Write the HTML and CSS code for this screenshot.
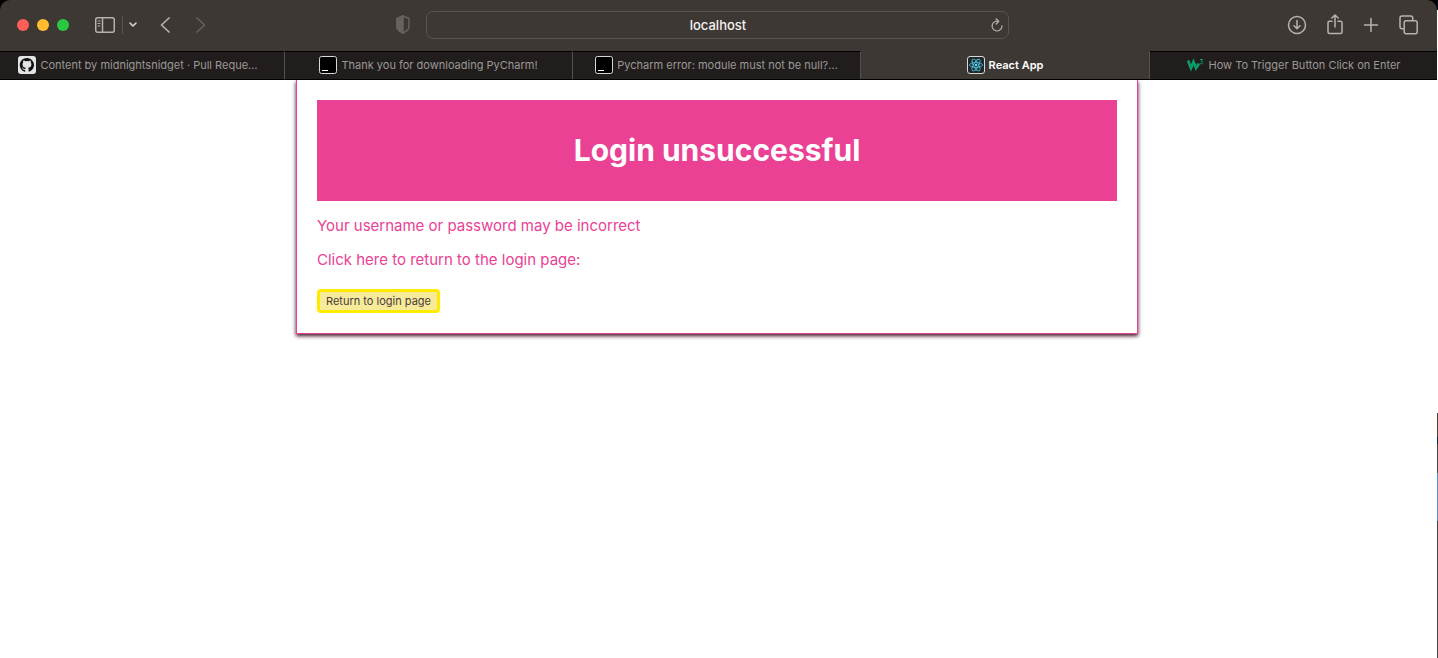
FILE: index.html
```html
<!DOCTYPE html>
<html lang="en">
<head>
<meta charset="utf-8">
<title>React App</title>
<link rel="stylesheet" href="styles.css">
</head>
<body>
<div class="window">
  <header class="browser">
    <div class="toolbar">
      <div class="tools-left">
        <div class="lights"><button class="light red" aria-label="Close"></button><button class="light amber" aria-label="Minimise"></button><button class="light green" aria-label="Zoom"></button></div>
        <button class="tool sidebar" aria-label="Show sidebar">
          <svg width="20" height="16" viewBox="0 0 20 16"><rect x=".7" y=".7" width="18.6" height="14.6" rx="2"/><path d="M7.5 1v14"/><path d="M3 4h2M3 6.500h2M3 9h2" stroke-width="1"/></svg>
        </button>
        <span class="divider"></span>
        <button class="tool menu" aria-label="Sidebar options">
          <svg width="8" height="6" viewBox="0 0 8 6"><path d="M1 1l3 3 3-3" stroke-width="1.6"/></svg>
        </button>
        <button class="tool back" aria-label="Back">
          <svg width="10" height="16" viewBox="0 0 10 16"><path d="M9 1L1.500 8 9 15" stroke-width="1.700"/></svg>
        </button>
        <button class="tool forward" aria-label="Forward">
          <svg width="10" height="16" viewBox="0 0 10 16"><path d="M1 1l7.500 7L1 15" stroke-width="1.700"/></svg>
        </button>
        <button class="tool shield" aria-label="Privacy report">
          <svg width="14" height="19" viewBox="0 0 14 19"><path d="M7 1l6 2.500v8.500c0 2.500-3 4.500-6 6-3-1.500-6-3.500-6-6V3.500z"/><path class="fill" d="M7 1L1 3.500V12c0 2.500 3 4.500 6 6z"/></svg>
        </button>
      </div>
      <div class="address">
        <input class="url" type="text" value="localhost" aria-label="Address">
        <button class="tool reload" aria-label="Reload">
          <svg width="12" height="14" viewBox="0 0 12 14"><path d="M10.900 7.800A4.900 4.900 0 1 1 6 3.200h1.500M5 .8l2.700 2.500L5.200 6" stroke-width="1.200"/></svg>
        </button>
      </div>
      <div class="tools-right">
        <button class="tool" aria-label="Downloads">
          <svg width="20" height="20" viewBox="0 0 20 20"><circle cx="10" cy="10" r="8.500"/><path d="M10 5.500v8M7 10.700l3 3 3-3"/></svg>
        </button>
        <button class="tool" aria-label="Share">
          <svg width="16" height="21" viewBox="0 0 16 21"><path d="M5 7.200H2.500c-1 0-1.500.5-1.500 1.500V18c0 1 .5 1.500 1.500 1.500h11c1 0 1.500-.5 1.500-1.500V8.700c0-1-.5-1.500-1.500-1.500H11M8 13V1M4.800 4L8 1l3.200 3"/></svg>
        </button>
        <button class="tool" aria-label="New tab">
          <svg width="16" height="16" viewBox="0 0 16 16"><path d="M8 1.500v13M1.500 8h13"/></svg>
        </button>
        <button class="tool" aria-label="Tab overview">
          <svg width="19" height="20" viewBox="0 0 19 20"><rect x="5.200" y="5.700" width="13" height="13" rx="2"/><path d="M4.500 13.800H3c-1.300 0-2-.7-2-2V3c0-1.300.7-2 2-2h8.700c1.300 0 2 .7 2 2v1.800"/></svg>
        </button>
      </div>
    </div>
    <nav class="tabs">
      <a class="tab first" href="#"><svg class="favicon" viewBox="0 0 18 18"><rect width="18" height="18" rx="3" fill="#e4e4e4"/><path fill="#111" d="M9 2a7 7 0 0 0-2.300 13.700c.4.1.5-.2.500-.4v-1.500c-2 .4-2.400-.9-2.400-.9-.3-.8-.8-1-.8-1-.7-.5.1-.5.100-.5.700.1 1.100.8 1.100.8.700 1.100 1.700.8 2.100.6.100-.5.300-.8.500-1-1.600-.2-3.300-.8-3.300-3.500 0-.8.300-1.400.7-1.900-.1-.2-.3-.9.100-1.800 0 0 .6-.2 1.900.7a7 7 0 0 1 3.500 0c1.300-.9 1.900-.7 1.900-.7.400.9.200 1.600.1 1.800.5.500.7 1.100.7 1.900 0 2.700-1.700 3.300-3.300 3.500.3.200.5.700.5 1.300v2.200c0 .2.100.5.500.4A7 7 0 0 0 9 2z"/></svg><span class="label">Content by midnightsnidget · Pull Reque…</span></a>
      <a class="tab" href="#"><svg class="favicon" viewBox="0 0 18 18"><rect x=".5" y=".5" width="17" height="17" rx="2" fill="#000" stroke="#d8d8d8"/><path d="M3 14.500h6" stroke="#fff"/></svg><span class="label">Thank you for downloading PyCharm!</span></a>
      <a class="tab" href="#"><svg class="favicon" viewBox="0 0 18 18"><rect x=".5" y=".5" width="17" height="17" rx="2" fill="#000" stroke="#d8d8d8"/><path d="M3 14.500h6" stroke="#fff"/></svg><span class="label">Pycharm error: module must not be null?…</span></a>
      <a class="tab active" href="#" aria-current="page"><svg class="favicon" viewBox="0 0 18 18"><rect x=".5" y=".5" width="17" height="17" rx="2.500" fill="#20282c" stroke="#d8d8d8"/><g fill="none" stroke="#4bb8d4" stroke-width=".9"><ellipse cx="9" cy="9" rx="6.500" ry="2.500"/><ellipse cx="9" cy="9" rx="6.500" ry="2.500" transform="rotate(60 9 9)"/><ellipse cx="9" cy="9" rx="6.500" ry="2.500" transform="rotate(120 9 9)"/></g><circle cx="9" cy="9" r="1.300" fill="#61dafb"/></svg><span class="label">React App</span></a>
      <a class="tab" href="#"><svg class="favicon" viewBox="0 0 18 18" fill="none" stroke="#0b9c65"><path d="M2 4.500L5 12l2.500-6 2.500 6 3-4.500" stroke-width="2.800"/><path d="M14 3.500h2.500L15.200 5.200c2 0 1.800 2.700.1 2.700-.8 0-1.300-.4-1.500-.9"/></svg><span class="label">How To Trigger Button Click on Enter</span></a>
    </nav>
  </header>
  <main class="page">
    <section class="card">
      <h1 class="banner">Login unsuccessful</h1>
      <p class="message">Your username or password may be incorrect</p>
      <p class="message">Click here to return to the login page:</p>
      <button class="return">Return to login page</button>
    </section>
  </main>
</div>
<div class="desktop-edge"></div>
</body>
</html>
```
FILE: styles.css
```css
* { box-sizing: border-box; }

body {
  margin: 0;
  min-height: 100vh;
  display: flex;
  background: #fff;
  font-family: Inter, "Liberation Sans", sans-serif;
}

button {
  margin: 0;
  padding: 0;
  border: 0;
  background: none;
  font: inherit;
}

.window { flex: 1; min-width: 0; }

.desktop-edge {
  width: 1px;
  background: linear-gradient(#0b1420 0 10px, #fff 10px 413px, #4a3d36 413px 437px, #0c2238 437px 444px, #484440 444px 473px, #4d8fd0 473px 521px, #444 521px);
}

.browser { background: #000; }

.toolbar {
  height: 51px;
  display: grid;
  grid-template-columns: 1fr 583px 1fr;
  align-items: center;
  padding: 0 2px 2px 0;
  border-radius: 10px 10px 0 0;
  background: #3e3835;
}

.tools-left, .tools-right, .lights { display: flex; align-items: center; }
.tools-left { padding: 0 16px 0 17px; }
.tools-right { justify-content: flex-end; gap: 20px; padding-right: 17px; }
.lights { gap: 8px; margin-right: 26px; }
.light { width: 12px; height: 12px; border-radius: 50%; }
.red { background: #ff5f57; }
.amber { background: #febc2e; }
.green { background: #28c840; }

.tool { display: flex; color: #b7b2af; }
.tool svg {
  fill: none;
  stroke: currentColor;
  stroke-width: 1.5;
  stroke-linecap: round;
  stroke-linejoin: round;
}
.divider { width: 1px; height: 18px; margin: 0 6px 0 7px; background: #575250; }
.menu { margin-right: 23px; color: #d8d5d3; }
.back { margin-right: 26px; }
.forward { color: #65605d; }
.shield { margin-left: auto; color: #68625f; }
.shield .fill { fill: currentColor; }

.address {
  height: 28px;
  display: flex;
  align-items: center;
  border: 1px solid #5b5552;
  border-radius: 7px;
  padding: 0 5px 0 18px;
}
.url {
  flex: 1;
  min-width: 0;
  border: 0;
  padding: 0;
  background: transparent;
  color: #f3f2f1;
  font: 500 13px/18px Inter, sans-serif;
  text-align: center;
}

.tabs {
  display: grid;
  grid-template-columns: 285fr 288fr 288fr 289fr 287fr;
  border-bottom: 1px solid #000;
}
.tab {
  height: 28px;
  display: flex;
  align-items: center;
  justify-content: center;
  gap: 4px;
  padding-bottom: 1px;
  border-top: 1px solid #000;
  border-right: 1px solid #55504e;
  background: #211d1c;
  color: #9c9897;
  font-size: 11px;
  line-height: 16px;
  text-decoration: none;
  white-space: nowrap;
}
.tab:last-child { border-right: 0; }
.first { padding-right: 8px; }
.active { border-top-color: #3e3835; background: #3e3835; color: #fff; font-weight: 600; }
.favicon { width: 18px; height: 18px; flex: none; }

.page { display: flex; justify-content: center; padding-right: 3px; }

.card {
  width: 100%;
  max-width: 842px;
  padding: 20px;
  border: 1px solid #eb4195;
  border-top: 0;
  box-shadow: 0 2px 4px #401020;
  clip-path: inset(0 -10px -10px);
}
.banner {
  margin: 0;
  padding: 31px 0;
  background: #eb4195;
  color: #fff;
  font-size: 30px;
  line-height: 39px;
  text-align: center;
}
.message {
  margin: 16px 0;
  color: #eb4195;
  font-size: 15px;
  line-height: 18px;
}
.return {
  display: block;
  margin-top: 20px;
  padding: 2px 6px;
  border: 3px solid #ffea00;
  border-radius: 4px;
  background: #f5eb98;
  color: #4c3a40;
  font-size: 11px;
  line-height: 14px;
}
```
